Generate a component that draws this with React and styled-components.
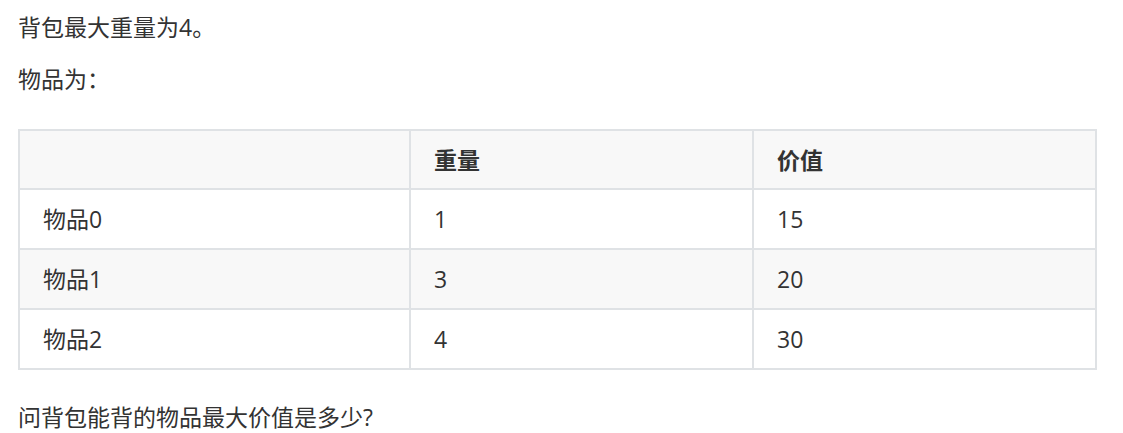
import React from "react";
import styled, { createGlobalStyle } from "styled-components";

const GlobalStyle = createGlobalStyle`
  body {
    margin: 0;
    background: #fff;
  }
`;

const Page = styled.div`
  padding: 11px 28px 0 18px;
  color: #333;
  font-family: "Open Sans", "Noto Sans CJK SC", sans-serif;
  font-size: 23px;
  line-height: 32px;
`;

const Para = styled.p`
  margin: 0 0 ${(p) => p.$gap || 20}px;
`;

const Table = styled.table`
  border-collapse: collapse;
  table-layout: fixed;
  width: 1077px;
  margin: 34px 0 31px;
`;

const Row = styled.tr`
  height: ${(p) => (p.$head ? 59 : 60)}px;
  background: ${(p) => (p.$shaded ? "#f8f8f8" : "#fff")};
`;

const Cell = styled.td`
  border: 2px solid #dfe2e5;
  padding: 0 23px;
  vertical-align: middle;
  text-align: left;
  font-weight: ${(p) => (p.$head ? 700 : 400)};
`;

const rows = [
  ["物品0", "1", "15"],
  ["物品1", "3", "20"],
  ["物品2", "4", "30"],
];

export default function App() {
  return (
    <>
      <GlobalStyle />
      <Page>
        <Para>背包最大重量为4。</Para>
        <Para $gap={0}>物品为：</Para>
        <Table>
          <colgroup>
            <col style={{ width: 391 }} />
            <col style={{ width: 343 }} />
            <col style={{ width: 343 }} />
          </colgroup>
          <thead>
            <Row $head $shaded>
              <Cell as="th" $head></Cell>
              <Cell as="th" $head>重量</Cell>
              <Cell as="th" $head>价值</Cell>
            </Row>
          </thead>
          <tbody>
            {rows.map((r, i) => (
              <Row key={r[0]} $shaded={i % 2 === 1}>
                {r.map((c, j) => (
                  <Cell key={j}>{c}</Cell>
                ))}
              </Row>
            ))}
          </tbody>
        </Table>
        <Para $gap={0}>问背包能背的物品最大价值是多少?</Para>
      </Page>
    </>
  );
}
